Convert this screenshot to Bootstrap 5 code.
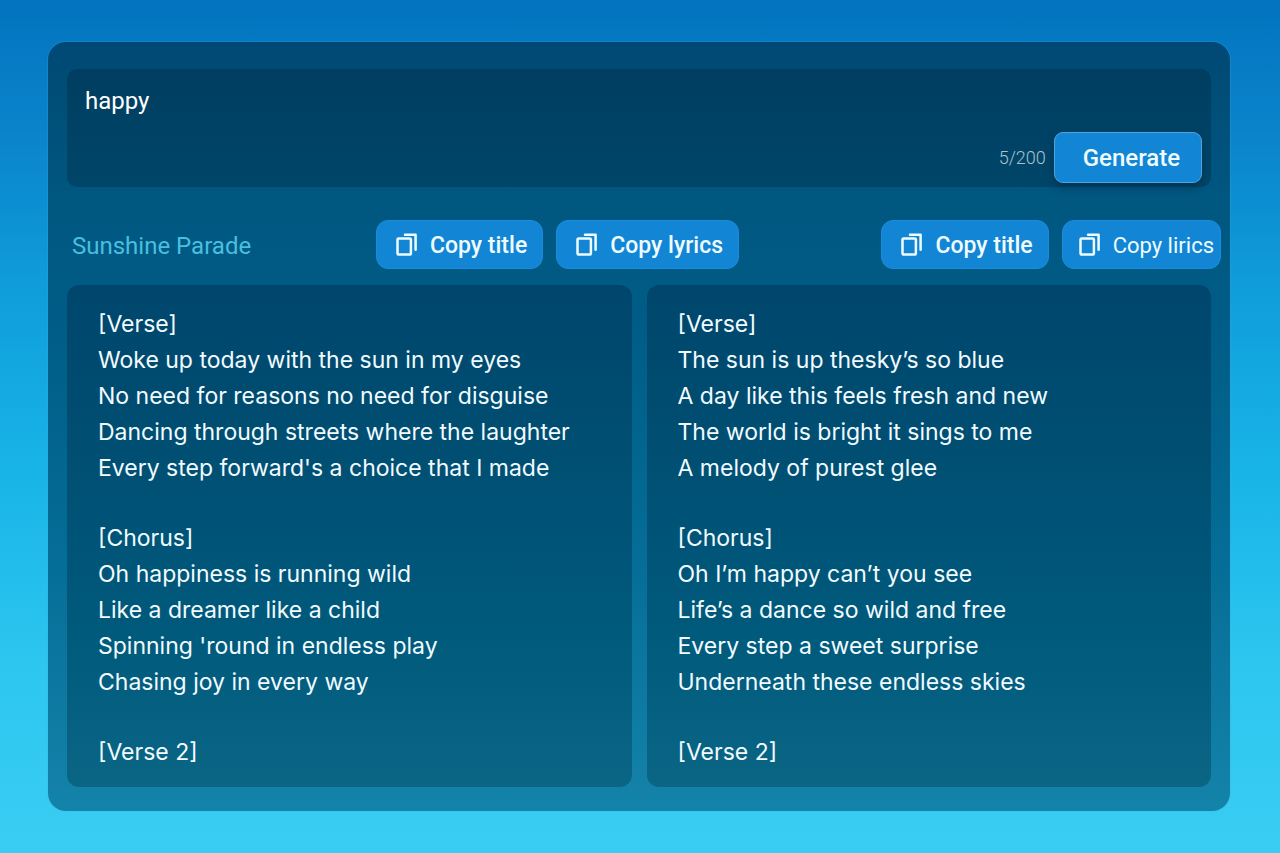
<!DOCTYPE html>
<html lang="en">
<head>
<meta charset="utf-8">
<meta name="viewport" content="width=device-width, initial-scale=1">
<title>Lyrics generator</title>
<link href="https://cdn.jsdelivr.net/npm/bootstrap@5.3.0/dist/css/bootstrap.min.css" rel="stylesheet">
<style>
  body {
    font-family: Roboto, "Liberation Sans", sans-serif;
    font-size: 24px;
    color: #f2fbff;
    padding: 42px 50px 42px 48px;
    background: linear-gradient(180deg, #0374bf 0%, #0a83cb 15%, #0f9cda 33%, #18b4e7 55%, #2cc6ef 78%, #3acdf3 100%);
  }
  .panel {
    padding: 27px 19px 24px;
    border-radius: 18px;
    background: linear-gradient(180deg, #004974 0%, #005780 20%, #005d87 38%, #046c96 65%, #1483aa 100%);
    box-shadow: 0 0 0 1px rgba(70, 170, 215, .2);
  }
  .composer {
    border-radius: 10px;
    background: linear-gradient(180deg, #003e61, #004669);
  }
  .prompt-input {
    height: 63px;
    padding: 14px 18px 0;
    border: 0;
    resize: none;
    color: #fff;
    line-height: 36px;
    background: transparent;
  }
  .prompt-input:focus { outline: 0; }
  .composer-foot { padding: 0 9px 4px; gap: 8px; }
  .counter { font-size: 18px; font-weight: 300; color: #a9c2d0; }
  .action {
    --bs-btn-color: #effcff;
    --bs-btn-bg: #1286d5;
    --bs-btn-border-color: #1a8cd9;
    --bs-btn-hover-color: #fff;
    --bs-btn-hover-bg: #1b92e2;
    --bs-btn-hover-border-color: #3aa3e6;
    --bs-btn-font-size: 23px;
    --bs-btn-font-weight: 500;
    --bs-btn-line-height: 29px;
    --bs-btn-border-radius: 12px;
    --bs-btn-padding-x: 15px;
    padding-top: 10px;
    padding-bottom: 8px;
    white-space: nowrap;
  }
  .action-generate {
    --bs-btn-font-size: 24px;
    --bs-btn-border-color: #4aa5e0;
    --bs-btn-border-radius: 9px;
    padding: 11px 21px 9px 28px;
    box-shadow: 0 4px 8px rgba(0, 30, 55, .45);
  }
  .action-copy { gap: 12px; padding-left: 19px; }
  .action-copy svg { margin-top: -2px; }
  .action-slim { --bs-btn-font-size: 22px; --bs-btn-font-weight: 400; --bs-btn-padding-x: 6px; padding-left: 16px; }
  .result-bar { margin: 33px -10px 16px 0; gap: 13px; }
  .song-title { width: 296px; padding: 3px 0 0 5px; font-size: 24px; line-height: 36px; font-weight: 400; color: #4abfe0; }
  .lyrics-grid { gap: 15px; }
  .lyrics {
    flex: 1 1 0;
    padding: 21px 31px 17px;
    border-radius: 12px;
    font-family: Inter, Roboto, sans-serif;
    font-size: 23px;
    line-height: 36px;
    background: linear-gradient(180deg, #00466c 0%, #004e72 30%, #005a7c 70%, #0b6585 100%);
  }
  .lyrics p { margin: 0 0 34px; }
  .lyrics p:last-child { margin: 0; }
</style>
</head>
<body class="min-vh-100 d-flex">
<svg class="d-none" aria-hidden="true">
  <symbol id="copy" viewBox="0 0 22 24">
    <g fill="none" stroke="#effcff" stroke-width="2.5" stroke-linejoin="round" stroke-linecap="round">
      <rect x="1.5" y="5.4" width="13.4" height="16.2" rx="1.2"/>
      <path d="M9 1.8h10.6v15"/>
    </g>
  </symbol>
</svg>
<main class="panel flex-grow-1 d-flex flex-column">
  <form class="composer">
    <textarea class="prompt-input d-block w-100" maxlength="200" aria-label="Song idea">happy</textarea>
    <div class="composer-foot d-flex justify-content-end align-items-center">
      <span class="counter">5/200</span>
      <button type="button" class="btn action action-generate">Generate</button>
    </div>
  </form>
  <div class="result-bar d-flex align-items-center">
    <h1 class="song-title mb-0">Sunshine Parade</h1>
    <button type="button" class="btn action action-copy d-flex align-items-center"><svg width="22" height="24" aria-hidden="true"><use href="#copy"/></svg>Copy title</button>
    <button type="button" class="btn action action-copy d-flex align-items-center"><svg width="22" height="24" aria-hidden="true"><use href="#copy"/></svg>Copy lyrics</button>
    <button type="button" class="btn action action-copy d-flex align-items-center ms-auto"><svg width="22" height="24" aria-hidden="true"><use href="#copy"/></svg>Copy title</button>
    <button type="button" class="btn action action-copy action-slim d-flex align-items-center"><svg width="22" height="24" aria-hidden="true"><use href="#copy"/></svg>Copy lirics</button>
  </div>
  <div class="lyrics-grid d-flex flex-grow-1">
    <section class="lyrics">
      <p>[Verse]<br>Woke up today with the sun in my eyes<br>No need for reasons no need for disguise<br>Dancing through streets where the laughter<br>Every step forward's a choice that I made</p>
      <p>[Chorus]<br>Oh happiness is running wild<br>Like a dreamer like a child<br>Spinning 'round in endless play<br>Chasing joy in every way</p>
      <p>[Verse 2]</p>
    </section>
    <section class="lyrics">
      <p>[Verse]<br>The sun is up thesky’s so blue<br>A day like this feels fresh and new<br>The world is bright it sings to me<br>A melody of purest glee</p>
      <p>[Chorus]<br>Oh I’m happy can’t you see<br>Life’s a dance so wild and free<br>Every step a sweet surprise<br>Underneath these endless skies</p>
      <p>[Verse 2]</p>
    </section>
  </div>
</main>
<script src="https://cdn.jsdelivr.net/npm/bootstrap@5.3.0/dist/js/bootstrap.bundle.min.js"></script>
</body>
</html>
